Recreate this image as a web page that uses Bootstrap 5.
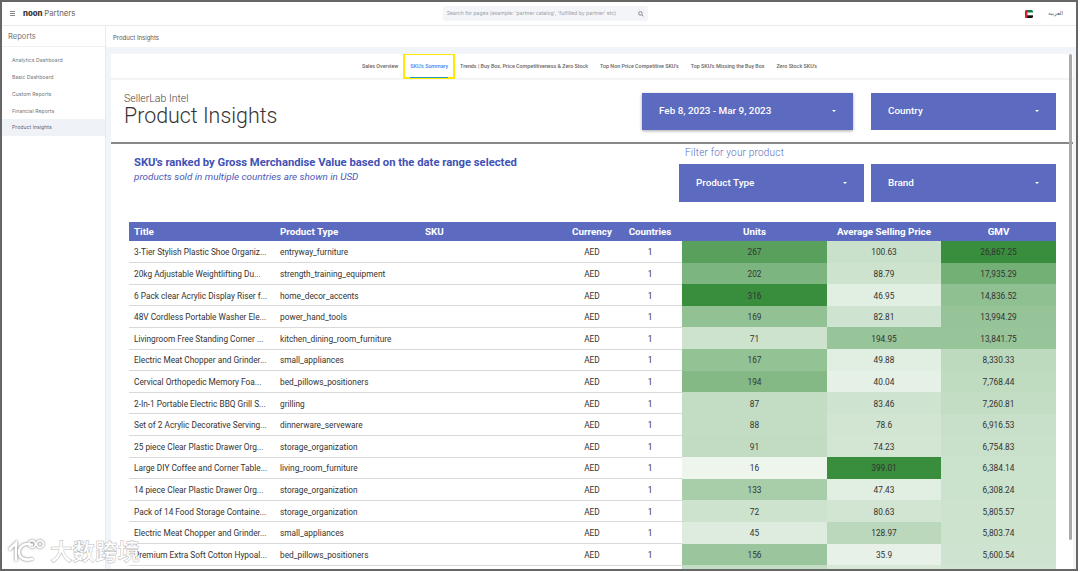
<!doctype html>
<html lang="en">
<head>
<meta charset="utf-8">
<title>Product Insights</title>
<link href="https://cdn.jsdelivr.net/npm/bootstrap@5.3.0/dist/css/bootstrap.min.css" rel="stylesheet">
<style>
html,body{height:572px;overflow:hidden;background:#fff}
body{font-family:Roboto,"Liberation Sans",sans-serif;color:#333}
.shot{width:1078px;height:571px;border:2px solid #666;overflow:hidden;position:relative;background:#fff}
.topbar{height:24px;border-bottom:1px solid #e8eaee;padding:0 13px 0 8px}
.burger{width:5px;height:5px;border-top:1px solid #888;border-bottom:1px solid #888;position:relative;margin-right:8px}
.burger::after{content:"";position:absolute;left:0;right:0;top:1px;border-top:1px solid #888}
.brandmark{font-family:Inter,sans-serif;font-size:7.8px;color:#666;word-spacing:-.5px}
.brandmark b{color:#333;font-weight:800}
.searchbox{width:205px;height:15px;margin-left:-10px;background:#f3f5f9;border-radius:3px;font-family:Inter,sans-serif;font-size:5.15px;color:#9a9fa8;padding:0 4px 0 4px}
.flagmark{display:block}
.lang{font-family:"DejaVu Sans",sans-serif;font-size:5.5px;color:#555;margin-left:15px}
.shell{height:545px}
.sidebar{width:104px;border-right:1px solid #e8eaee;flex:none}
.sidehead{height:21px;font-family:Inter,sans-serif;font-size:7.6px;color:#777;padding:2px 6px 0;border-bottom:1px solid #f0f2f5}
.sidelist{padding-top:5px}
.sidelist .list-group-item{border:0;padding:0 10px;height:17px;line-height:17px;font-family:Inter,sans-serif;font-size:5.2px;color:#777;background:transparent;border-radius:0}
.sidelist .list-group-item.active{background:#eff3f8;color:#667}
.mainarea{flex:1;min-width:0;background:#f1f4f9}
.crumb{height:21px;background:#fff;font-family:Inter,sans-serif;font-size:6px;color:#555;padding:2px 7px 0}
.panel{margin:7px 3px 0 5px;background:#fff;height:520px;position:relative;overflow:hidden}
.tabbar{height:26px;border-bottom:2px solid #f3f4f6;padding-right:5px}
.tabbar .nav-link{padding:0 6px;height:24px;line-height:24px;font-size:5.35px;font-weight:500;color:#666;position:relative;border-radius:0}
.tabbar .nav-link.active{color:#4285f4}
.tabbar .nav-link.active::after{content:"";position:absolute;left:6px;right:6px;bottom:0;height:1px;background:#2a9bb8}
.marked{outline:2px solid #ffeb00;outline-offset:-1px}
.headzone{height:64px;padding:0 17px 0 13px;border-bottom:2px solid #888}
.eyebrow{font-weight:300;font-size:10.5px;line-height:11px;color:#444;margin-top:13px}
.bigtitle{font-weight:300;font-size:21.4px;line-height:24px;color:#333;margin:0}
.pick{background:#5c6bc0;color:#fff;border:0;border-radius:0;font-size:9.9px;font-weight:500;height:37px;padding:0 17px;display:flex;align-items:center;justify-content:space-between;text-align:left}
.pick:hover,.pick:focus{background:#5c6bc0;color:#fff}
.pick.dropdown-toggle::after{border-top-width:2.5px;border-left-width:2.5px;border-right-width:2.5px;margin-right:0}
.pick-date{width:211px;box-shadow:0 1px 3px rgba(0,0,0,.35);margin-right:18px}
.pick-wide{width:185px}
.pickrow{gap:7px}
.pickrow .pick{height:38px}
.zone{padding:0 17px 0 18px}
.notes{padding-left:5px;padding-top:12px}
.rankhead{font-size:11.25px;font-weight:700;line-height:14px;color:#3f51b5;margin:0}
.ranksub{font-size:9.9px;font-style:italic;font-weight:400;line-height:14px;color:#4a5ab8;margin:0}
.filterlabel{font-weight:300;font-size:10px;line-height:12px;color:#5c6bc0;letter-spacing:.2px;margin:3px 0 5px 6px;height:12px}
.rankgrid{table-layout:fixed;width:927px;margin:20px 0 0;border-collapse:collapse;font-size:8.3px;color:#333}
.rankgrid th{background:#5c6bc0;color:#fff;font-size:9.8px;font-weight:700;height:19px;padding:0 5px;border:0;line-height:19px}
.rankgrid td{height:21.62px;padding:1px 5px 0;border:0;border-bottom:1px solid #d9d9d9;vertical-align:middle;line-height:12px;color:#333;white-space:nowrap;background-color:transparent;box-shadow:none}
.rankgrid td.heat{border-bottom-color:#fff0}
.rankgrid th:nth-child(1){width:146px}
.rankgrid th:nth-child(2){width:145px}
.rankgrid th:nth-child(3){width:146px}
.rankgrid th:nth-child(4){width:52px;padding:0}
.rankgrid th:nth-child(5){width:64px;padding:0}
.rankgrid th:nth-child(6){width:145px}
.rankgrid th:nth-child(7){width:114px;padding:0}
.rankgrid th:nth-child(8){width:115px}
.ctr{text-align:center}
.fakebar{position:absolute;right:1px;top:0;width:3px;height:486px;background:#a9a9a9;border-radius:2px}
.stamp{position:absolute;left:6px;top:526px;display:flex;align-items:center;pointer-events:none;z-index:5}
.stampmark{filter:drop-shadow(0 0 1px rgba(80,80,80,.85))}
.stamp span{font-family:"Noto Sans CJK SC",sans-serif;font-size:22.5px;font-weight:700;line-height:24px;color:#fff;-webkit-text-stroke:.5px rgba(150,150,150,.7);margin:10px 0 0 0}
</style>
</head>
<body>
<div class="shot">
  <nav class="topbar d-flex align-items-center">
    <span class="burger"></span>
    <span class="brandmark"><b>noon</b> Partners</span>
    <div class="flex-grow-1 d-flex justify-content-center">
      <div class="searchbox d-flex align-items-center justify-content-between">
        <span>Search for pages (example: 'partner catalog', 'fulfilled by partner' etc)</span>
        <svg width="6" height="6" viewBox="0 0 10 10"><circle cx="4" cy="4" r="3" fill="none" stroke="#778" stroke-width="1.4"/><path d="M6.4 6.4 9 9" stroke="#778" stroke-width="1.4"/></svg>
      </div>
    </div>
    <svg class="flagmark" width="8" height="8" viewBox="0 0 8 8"><clipPath id="fl"><rect width="8" height="8" rx="1.6"/></clipPath><g clip-path="url(#fl)"><rect width="8" height="2.7" fill="#00843d"/><rect y="2.7" width="8" height="2.6" fill="#fff"/><rect y="5.3" width="8" height="2.7" fill="#111"/><rect width="2.4" height="8" fill="#d8202a"/></g></svg>
    <span class="lang">العربية</span>
  </nav>
  <div class="shell d-flex">
    <aside class="sidebar">
      <div class="sidehead d-flex align-items-center">Reports</div>
      <div class="list-group sidelist">
        <a class="list-group-item">Analytics Dashboard</a>
        <a class="list-group-item">Basic Dashboard</a>
        <a class="list-group-item">Custom Reports</a>
        <a class="list-group-item">Financial Reports</a>
        <a class="list-group-item active">Product Insights</a>
      </div>
    </aside>
    <main class="mainarea">
      <div class="crumb d-flex align-items-center">Product Insights</div>
      <div class="panel">
        <div class="nav tabbar justify-content-center">
          <a class="nav-link">Sales Overview</a>
          <a class="nav-link active marked">SKU's Summary</a>
          <a class="nav-link">Trends | Buy Box, Price Competitiveness &amp; Zero Stock</a>
          <a class="nav-link">Top Non Price Competitive SKU's</a>
          <a class="nav-link">Top SKU's Missing the Buy Box</a>
          <a class="nav-link">Zero Stock SKU's</a>
        </div>
        <div class="headzone d-flex justify-content-between align-items-center">
          <div class="align-self-start">
            <div class="eyebrow">SellerLab Intel</div>
            <h1 class="bigtitle">Product Insights</h1>
          </div>
          <div class="d-flex">
            <button class="btn pick pick-date dropdown-toggle">Feb 8, 2023 - Mar 9, 2023</button>
            <button class="btn pick pick-wide dropdown-toggle">Country</button>
          </div>
        </div>
        <div class="zone">
          <div class="d-flex justify-content-between">
            <div class="notes">
              <h2 class="rankhead">SKU's ranked by Gross Merchandise Value based on the date range selected</h2>
              <p class="ranksub">products sold in multiple countries are shown in USD</p>
            </div>
            <div>
              <div class="filterlabel">Filter for your product</div>
              <div class="d-flex pickrow">
                <button class="btn pick pick-wide dropdown-toggle">Product Type</button>
                <button class="btn pick pick-wide dropdown-toggle">Brand</button>
              </div>
            </div>
          </div>
          <table class="table rankgrid">
            <thead><tr><th>Title</th><th>Product Type</th><th>SKU</th><th class="ctr">Currency</th><th class="ctr">Countries</th><th class="ctr">Units</th><th class="ctr">Average Selling Price</th><th class="ctr">GMV</th></tr></thead>
            <tbody>
<tr><td>3-Tier Stylish Plastic Shoe Organiz...</td><td>entryway_furniture</td><td></td><td class="ctr">AED</td><td class="ctr">1</td><td class="ctr heat" style="background:rgba(56,142,60,.84)">267</td><td class="ctr heat" style="background:rgba(56,142,60,.27)">100.63</td><td class="ctr heat" style="background:rgba(56,142,60,1)">26,867.25</td></tr>
<tr><td>20kg Adjustable Weightlifting Du...</td><td>strength_training_equipment</td><td></td><td class="ctr">AED</td><td class="ctr">1</td><td class="ctr heat" style="background:rgba(56,142,60,.65)">202</td><td class="ctr heat" style="background:rgba(56,142,60,.25)">88.79</td><td class="ctr heat" style="background:rgba(56,142,60,.7)">17,935.29</td></tr>
<tr><td>6 Pack clear Acrylic Display Riser f...</td><td>home_decor_accents</td><td></td><td class="ctr">AED</td><td class="ctr">1</td><td class="ctr heat" style="background:rgba(56,142,60,1)">316</td><td class="ctr heat" style="background:rgba(56,142,60,.15)">46.95</td><td class="ctr heat" style="background:rgba(56,142,60,.56)">14,836.52</td></tr>
<tr><td>48V Cordless Portable Washer Ele...</td><td>power_hand_tools</td><td></td><td class="ctr">AED</td><td class="ctr">1</td><td class="ctr heat" style="background:rgba(56,142,60,.55)">169</td><td class="ctr heat" style="background:rgba(56,142,60,.24)">82.81</td><td class="ctr heat" style="background:rgba(56,142,60,.53)">13,994.29</td></tr>
<tr><td>Livingroom Free Standing Corner ...</td><td>kitchen_dining_room_furniture</td><td></td><td class="ctr">AED</td><td class="ctr">1</td><td class="ctr heat" style="background:rgba(56,142,60,.25)">71</td><td class="ctr heat" style="background:rgba(56,142,60,.52)">194.95</td><td class="ctr heat" style="background:rgba(56,142,60,.52)">13,841.75</td></tr>
<tr><td>Electric Meat Chopper and Grinder...</td><td>small_appliances</td><td></td><td class="ctr">AED</td><td class="ctr">1</td><td class="ctr heat" style="background:rgba(56,142,60,.54)">167</td><td class="ctr heat" style="background:rgba(56,142,60,.15)">49.88</td><td class="ctr heat" style="background:rgba(56,142,60,.33)">8,330.33</td></tr>
<tr><td>Cervical Orthopedic Memory Foa...</td><td>bed_pillows_positioners</td><td></td><td class="ctr">AED</td><td class="ctr">1</td><td class="ctr heat" style="background:rgba(56,142,60,.62)">194</td><td class="ctr heat" style="background:rgba(56,142,60,.13)">40.04</td><td class="ctr heat" style="background:rgba(56,142,60,.32)">7,768.44</td></tr>
<tr><td>2-In-1 Portable Electric BBQ Grill S...</td><td>grilling</td><td></td><td class="ctr">AED</td><td class="ctr">1</td><td class="ctr heat" style="background:rgba(56,142,60,.3)">87</td><td class="ctr heat" style="background:rgba(56,142,60,.24)">83.46</td><td class="ctr heat" style="background:rgba(56,142,60,.3)">7,260.81</td></tr>
<tr><td>Set of 2 Acrylic Decorative Serving...</td><td>dinnerware_serveware</td><td></td><td class="ctr">AED</td><td class="ctr">1</td><td class="ctr heat" style="background:rgba(56,142,60,.3)">88</td><td class="ctr heat" style="background:rgba(56,142,60,.23)">78.6</td><td class="ctr heat" style="background:rgba(56,142,60,.28)">6,916.53</td></tr>
<tr><td>25 piece Clear Plastic Drawer Org...</td><td>storage_organization</td><td></td><td class="ctr">AED</td><td class="ctr">1</td><td class="ctr heat" style="background:rgba(56,142,60,.31)">91</td><td class="ctr heat" style="background:rgba(56,142,60,.22)">74.23</td><td class="ctr heat" style="background:rgba(56,142,60,.27)">6,754.83</td></tr>
<tr><td>Large DIY Coffee and Corner Table...</td><td>living_room_furniture</td><td></td><td class="ctr">AED</td><td class="ctr">1</td><td class="ctr heat" style="background:rgba(56,142,60,.09)">16</td><td class="ctr heat" style="background:rgba(56,142,60,1)">399.01</td><td class="ctr heat" style="background:rgba(56,142,60,.26)">6,384.14</td></tr>
<tr><td>14 piece Clear Plastic Drawer Org...</td><td>storage_organization</td><td></td><td class="ctr">AED</td><td class="ctr">1</td><td class="ctr heat" style="background:rgba(56,142,60,.44)">133</td><td class="ctr heat" style="background:rgba(56,142,60,.15)">47.43</td><td class="ctr heat" style="background:rgba(56,142,60,.26)">6,308.24</td></tr>
<tr><td>Pack of 14 Food Storage Containe...</td><td>storage_organization</td><td></td><td class="ctr">AED</td><td class="ctr">1</td><td class="ctr heat" style="background:rgba(56,142,60,.25)">72</td><td class="ctr heat" style="background:rgba(56,142,60,.23)">80.63</td><td class="ctr heat" style="background:rgba(56,142,60,.25)">5,805.57</td></tr>
<tr><td>Electric Meat Chopper and Grinder...</td><td>small_appliances</td><td></td><td class="ctr">AED</td><td class="ctr">1</td><td class="ctr heat" style="background:rgba(56,142,60,.17)">45</td><td class="ctr heat" style="background:rgba(56,142,60,.34)">128.97</td><td class="ctr heat" style="background:rgba(56,142,60,.25)">5,803.74</td></tr>
<tr><td>Premium Extra Soft Cotton Hypoal...</td><td>bed_pillows_positioners</td><td></td><td class="ctr">AED</td><td class="ctr">1</td><td class="ctr heat" style="background:rgba(56,142,60,.5)">156</td><td class="ctr heat" style="background:rgba(56,142,60,.12)">35.9</td><td class="ctr heat" style="background:rgba(56,142,60,.24)">5,600.54</td></tr>
<tr><td>&nbsp;</td><td></td><td></td><td></td><td></td><td class="heat" style="background:rgba(56,142,60,.3)"></td><td class="heat" style="background:rgba(56,142,60,.2)"></td><td class="heat" style="background:rgba(56,142,60,.23)"></td></tr>
            </tbody>
          </table>
        </div>
        <div class="fakebar"></div>
      </div>
    </main>
  </div>
  <div class="stamp">
    <svg class="stampmark" width="42" height="34" viewBox="0 0 42 34" fill="none" stroke="#fff" stroke-width="2.6" stroke-linecap="round"><path d="M2 21 8 15V32"/><path d="M24 17C16 14 11 19 11 24C11 30 17 33 24 31"/><circle cx="24" cy="16" r="3.4" stroke-width="1.7"/><circle cx="32" cy="16" r="3.4" stroke-width="1.7"/></svg>
    <span>大数跨境</span>
  </div>
</div>
<script src="https://cdn.jsdelivr.net/npm/bootstrap@5.3.0/dist/js/bootstrap.bundle.min.js"></script>
</body>
</html>
